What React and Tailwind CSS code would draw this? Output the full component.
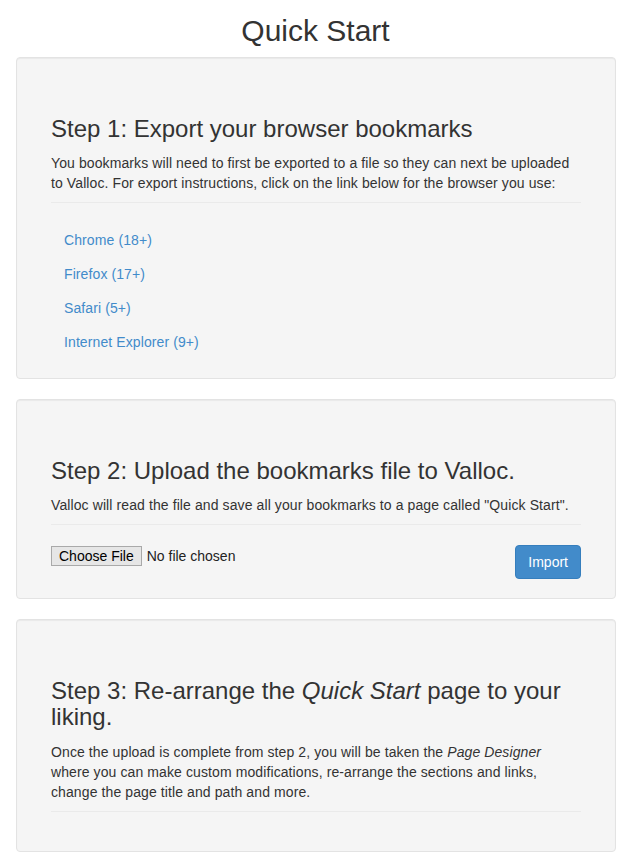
import { useState } from 'react';

const browsers = [
  { name: 'Chrome (18+)', href: '#chrome' },
  { name: 'Firefox (17+)', href: '#firefox' },
  { name: 'Safari (5+)', href: '#safari' },
  { name: 'Internet Explorer (9+)', href: '#ie' },
];

function Well({ children, className = '' }) {
  return (
    <div
      className={`ml-[16px] w-[600px] bg-[#f5f5f5] border border-[#e3e3e3] rounded-[4px] shadow-[inset_0_1px_1px_rgba(0,0,0,0.05)] p-[19px] ${className}`}
    >
      <div className="px-[15px] pt-[39px]">{children}</div>
    </div>
  );
}

function App() {
  const [fileName, setFileName] = useState('');

  return (
    <div className="min-h-screen bg-white text-[#333] font-['Liberation_Sans',Arial,sans-serif] text-[14px] leading-[20px]">
      <h1 className="text-center text-[30px] leading-[33px] pt-[14px] mb-[10px] font-normal">
        Quick Start
      </h1>

      {/* Paso 1 */}
      <Well className="mb-[20px]">
        <h3 className="text-[24px] leading-[26px] mb-[11px]">
          Step 1: Export your browser bookmarks
        </h3>
        <p className="tracking-[0.1px]">
          You bookmarks will need to first be exported to a file so they can next be uploaded
          <br />
          to Valloc. For export instructions, click on the link below for the browser you use:
        </p>
        <hr className="mt-[9px] border-0 border-t border-[#eaeaea]" />
        <ul className="mt-[27px] pl-[13px] pb-[7px] flex flex-col gap-[14px] tracking-[0.1px]">
          {browsers.map((b) => (
            <li key={b.name}>
              <a href={b.href} className="text-[#428bca] hover:underline">
                {b.name}
              </a>
            </li>
          ))}
        </ul>
      </Well>

      {/* Paso 2 */}
      <Well className="mb-[20px]">
        <h3 className="text-[24px] leading-[26px] mb-[11px]">
          Step 2: Upload the bookmarks file to Valloc.
        </h3>
        <p className="tracking-[0.1px]">
          Valloc will read the file and save all your bookmarks to a page called "Quick Start".
        </p>
        <hr className="mt-[9px] border-0 border-t border-[#eaeaea]" />
        <div className="mt-[20px] flex justify-between items-start">
          <label className="mt-[1px] flex items-center cursor-pointer">
            <input
              type="file"
              className="hidden"
              onChange={(e) => setFileName(e.target.files?.[0]?.name || '')}
            />
            <span className="border border-[#a9a9a9] bg-[#e6e6e6] text-black px-[7px] leading-[18px]">
              Choose File
            </span>
            <span className="ml-[5px] text-[#222] leading-[18px]">
              {fileName || 'No file chosen'}
            </span>
          </label>
          <button
            type="button"
            className="bg-[#428bca] border border-[#357ebd] text-white px-[12px] py-[6px] leading-[20px] rounded-[4px] hover:bg-[#3276b1]"
          >
            Import
          </button>
        </div>
      </Well>

      {/* Paso 3 */}
      <Well className="mb-[12px]">
        <h3 className="text-[24px] leading-[26.4px] mb-[11px]">
          Step 3: Re-arrange the <em>Quick Start</em> page to your liking.
        </h3>
        <p className="tracking-[0.1px]">
          Once the upload is complete from step 2, you will be taken the <em>Page Designer</em>
          <br />
          where you can make custom modifications, re-arrange the sections and links,
          <br />
          change the page title and path and more.
        </p>
        <hr className="mt-[9px] mb-[20px] border-0 border-t border-[#eaeaea]" />
      </Well>
    </div>
  );
}

export default App;
